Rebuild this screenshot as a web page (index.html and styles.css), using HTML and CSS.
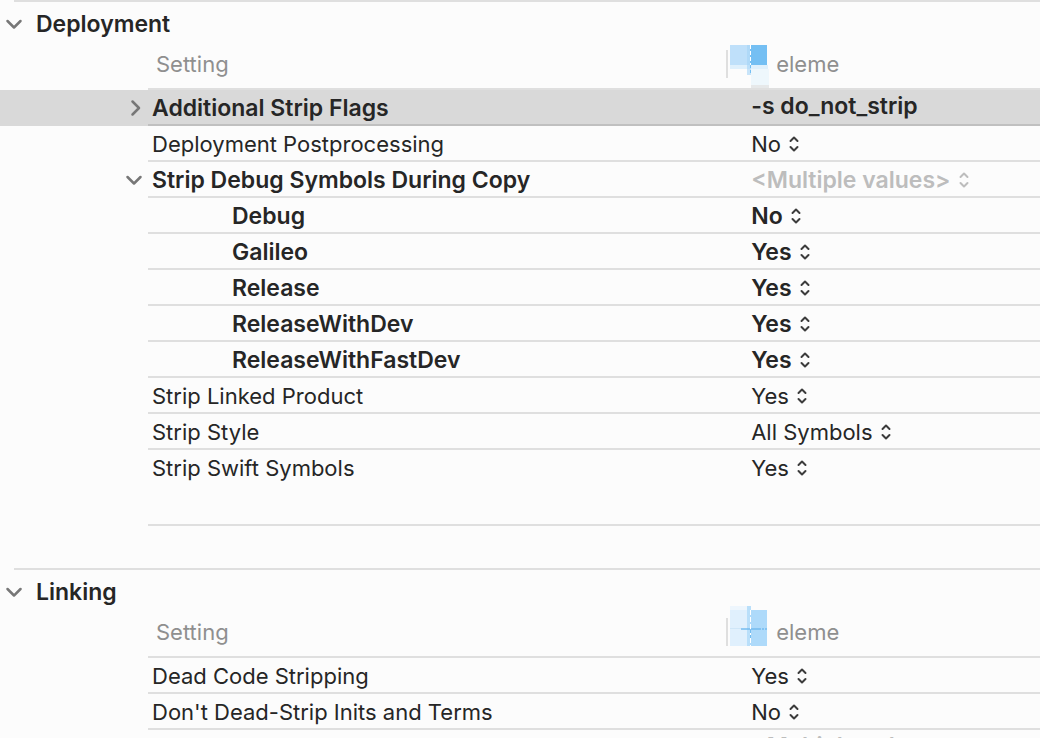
FILE: index.html
```
<!DOCTYPE html>
<html lang="en">

<head>
    <meta charset="UTF-8">
    <meta name="viewport" content="width=device-width, initial-scale=1.0">
    <title>Build Settings</title>
    <link rel="stylesheet" href="styles.css">
</head>

<body>
    <!-- shared icons -->
    <svg class="sprite" aria-hidden="true">
        <symbol id="down" viewBox="0 0 18 18">
            <path d="M2.500 6 L9 12.500 L15.500 6" />
        </symbol>
        <symbol id="right" viewBox="0 0 18 18">
            <path d="M7.500 2.500 L14 9 L7.500 15.500" />
        </symbol>
        <symbol id="updown" viewBox="0 0 10 16">
            <path d="M1.500 5 L5 1.500 L8.500 5 M1.500 11 L5 14.500 L8.500 11" />
        </symbol>
    </svg>

    <section class="group">
        <h2 class="title">
            <button class="toggle" aria-label="Collapse Deployment"><svg><use href="#down" /></svg></button>
            Deployment
        </h2>
        <table class="settings">
            <colgroup>
                <col class="col-gutter">
                <col class="col-name">
                <col>
            </colgroup>
            <thead>
                <tr>
                    <td></td>
                    <th class="name">Setting</th>
                    <th>
                        <div class="target">
                            <svg class="logo" viewBox="-1 -2 40 44">
                                <rect x="1" y="1" width="20" height="20" fill="#bfe0fa" />
                                <rect x="1" y="21" width="38" height="4" fill="#dff0fc" />
                                <rect x="18" y="1" width="4" height="30" fill="#a5d4f7" fill-opacity=".6" />
                                <rect x="21" y="1" width="17" height="20" fill="#74bff3" />
                                <rect x="22" y="25" width="18" height="16" fill="#eef7fc" />
                                <rect x="22" y="41" width="18" height="3" fill="#e6e8e9" />
                                <path d="M21.500 1 V21" stroke="#fff" stroke-dasharray="4 2" />
                                <path d="M21.500 21 V31" stroke="#74bff3" stroke-dasharray="3 2" />
                            </svg>
                            eleme
                        </div>
                    </th>
                </tr>
            </thead>
            <tbody>
                <tr class="selected">
                    <td class="gutter"><button class="toggle" aria-label="Expand Additional Strip Flags"><svg><use href="#right" /></svg></button></td>
                    <td class="name bold">Additional Strip Flags</td>
                    <td class="bold field">-s do_not_strip</td>
                </tr>
                <tr>
                    <td></td>
                    <td class="name"><label for="post">Deployment Postprocessing</label></td>
                    <td><span class="pick"><select id="post"><option>No</option><option>Yes</option></select><svg><use href="#updown" /></svg></span></td>
                </tr>
                <tr>
                    <td class="gutter"><button class="toggle" aria-label="Collapse Strip Debug Symbols During Copy"><svg><use href="#down" /></svg></button></td>
                    <td class="name bold"><label for="copy">Strip Debug Symbols During Copy</label></td>
                    <td class="bold"><span class="pick mixed"><select id="copy"><option>&lt;Multiple values&gt;</option><option>Yes</option><option>No</option></select><svg><use href="#updown" /></svg></span></td>
                </tr>
                <tr>
                    <td></td>
                    <td class="name bold sub"><label for="debug">Debug</label></td>
                    <td class="bold"><span class="pick"><select id="debug"><option>No</option><option>Yes</option></select><svg><use href="#updown" /></svg></span></td>
                </tr>
                <tr>
                    <td></td>
                    <td class="name bold sub"><label for="galileo">Galileo</label></td>
                    <td class="bold"><span class="pick"><select id="galileo"><option>Yes</option><option>No</option></select><svg><use href="#updown" /></svg></span></td>
                </tr>
                <tr>
                    <td></td>
                    <td class="name bold sub"><label for="release">Release</label></td>
                    <td class="bold"><span class="pick"><select id="release"><option>Yes</option><option>No</option></select><svg><use href="#updown" /></svg></span></td>
                </tr>
                <tr>
                    <td></td>
                    <td class="name bold sub"><label for="dev">ReleaseWithDev</label></td>
                    <td class="bold"><span class="pick"><select id="dev"><option>Yes</option><option>No</option></select><svg><use href="#updown" /></svg></span></td>
                </tr>
                <tr>
                    <td></td>
                    <td class="name bold sub"><label for="fastdev">ReleaseWithFastDev</label></td>
                    <td class="bold"><span class="pick"><select id="fastdev"><option>Yes</option><option>No</option></select><svg><use href="#updown" /></svg></span></td>
                </tr>
                <tr>
                    <td></td>
                    <td class="name"><label for="linked">Strip Linked Product</label></td>
                    <td><span class="pick"><select id="linked"><option>Yes</option><option>No</option></select><svg><use href="#updown" /></svg></span></td>
                </tr>
                <tr>
                    <td></td>
                    <td class="name"><label for="style">Strip Style</label></td>
                    <td><span class="pick"><select id="style"><option>All Symbols</option><option>Debugging Symbols</option></select><svg><use href="#updown" /></svg></span></td>
                </tr>
                <tr class="last">
                    <td></td>
                    <td class="name"><label for="swift">Strip Swift Symbols</label></td>
                    <td><span class="pick"><select id="swift"><option>Yes</option><option>No</option></select><svg><use href="#updown" /></svg></span></td>
                </tr>
            </tbody>
        </table>
    </section>

    <section class="group">
        <h2 class="title">
            <button class="toggle" aria-label="Collapse Linking"><svg><use href="#down" /></svg></button>
            Linking
        </h2>
        <table class="settings">
            <colgroup>
                <col class="col-gutter">
                <col class="col-name">
                <col>
            </colgroup>
            <thead>
                <tr>
                    <td></td>
                    <th class="name">Setting</th>
                    <th>
                        <div class="target">
                            <svg class="logo" viewBox="-1 4 40 44">
                                <rect x="1" y="0" width="20" height="4" fill="#eef6fd" />
                                <rect x="1" y="4" width="18" height="36" fill="#e0f0fd" />
                                <rect x="18" y="0" width="4" height="40" fill="#b9dffa" />
                                <rect x="21" y="4" width="17" height="36" fill="#aedafa" />
                                <path d="M1 22.500 H12" stroke="#cfe6f8" />
                                <path d="M12 23 H38" stroke="#74bcef" stroke-width="1.5" stroke-dasharray="20 1 2 1" />
                                <path d="M21.500 4 V40" stroke="#fff" stroke-dasharray="5 2" />
                                <path d="M21.500 24 V34" stroke="#74bcef" stroke-dasharray="3 2" />
                            </svg>
                            eleme
                        </div>
                    </th>
                </tr>
            </thead>
            <tbody>
                <tr>
                    <td></td>
                    <td class="name"><label for="dead">Dead Code Stripping</label></td>
                    <td><span class="pick"><select id="dead"><option>Yes</option><option>No</option></select><svg><use href="#updown" /></svg></span></td>
                </tr>
                <tr>
                    <td></td>
                    <td class="name"><label for="inits">Don't Dead-Strip Inits and Terms</label></td>
                    <td><span class="pick"><select id="inits"><option>No</option><option>Yes</option></select><svg><use href="#updown" /></svg></span></td>
                </tr>
                <tr>
                    <td></td>
                    <td class="name"></td>
                    <td class="field bold mixed">&lt;Multiple values&gt;</td>
                </tr>
            </tbody>
        </table>
    </section>
</body>

</html>
```
FILE: styles.css
```
* {
    padding: 0;
    margin: 0;
    box-sizing: border-box;
}

body {
    background-color: #fcfcfc;
    color: #262626;
    font-family: Inter, "Liberation Sans", sans-serif;
    font-size: 22px;
    line-height: 32px;
    overflow: hidden;
}

.sprite {
    display: none;
}

svg {
    fill: none;
}

.group {
    margin-bottom: 42px;
}

.title {
    display: flex;
    align-items: center;
    gap: 13px;
    height: 46px;
    margin-left: 14px;
    border-top: 2px solid #dfdfdf;
    font-size: 23px;
    font-weight: 600;
}

.title .toggle {
    margin-left: -9px;
}

.toggle {
    display: block;
    width: 18px;
    height: 18px;
    border: none;
    background: none;
}

.toggle svg {
    display: block;
    width: 18px;
    height: 18px;
    stroke: #777;
    stroke-width: 2.5;
    stroke-linecap: round;
    stroke-linejoin: round;
}

.settings {
    width: 100%;
    table-layout: fixed;
    border-collapse: separate;
    border-spacing: 0;
}

.col-gutter {
    width: 148px;
}

.col-name {
    width: 58%;
}

th,
td {
    height: 36px;
    text-align: left;
    vertical-align: middle;
    white-space: nowrap;
}

td {
    padding-top: 2px;
}

th,
td + td {
    border-bottom: 2px solid #dfdfdf;
}

th {
    height: 44px;
    padding-bottom: 6px;
    color: #8f8f8f;
    font-weight: 400;
}

.name {
    padding-left: 4px;
}

th.name {
    padding-left: 8px;
}

.name.sub {
    padding-left: 84px;
}

.bold {
    font-size: 23px;
    font-weight: 600;
}

.field {
    padding: 0 0 2px;
}

.gutter {
    padding-top: 0;
}

.gutter .toggle {
    margin-left: auto;
    margin-right: 5px;
}

.selected {
    background-color: #d9d9d9;
}

.selected td + td {
    border-color: #c0c0c0;
}

.last td {
    height: 76px;
    padding-bottom: 40px;
}

/* product column header */
.target {
    display: flex;
    align-items: center;
    gap: 8px;
    height: 28px;
    margin-left: -25px;
    border-left: 2px solid #dfdfdf;
}

.logo {
    width: 40px;
    height: 44px;
    overflow: visible;
}

.pick {
    display: flex;
    align-items: center;
    gap: 8px;
}

.pick select {
    appearance: none;
    field-sizing: content;
    border: none;
    background: none;
    color: inherit;
    font: inherit;
}

.pick svg {
    width: 10px;
    height: 16px;
    stroke: #3c3c3c;
    stroke-width: 2;
    stroke-linecap: round;
    stroke-linejoin: round;
}

.mixed {
    color: #bdbdbd;
}

.mixed svg {
    stroke: #bdbdbd;
}
```
